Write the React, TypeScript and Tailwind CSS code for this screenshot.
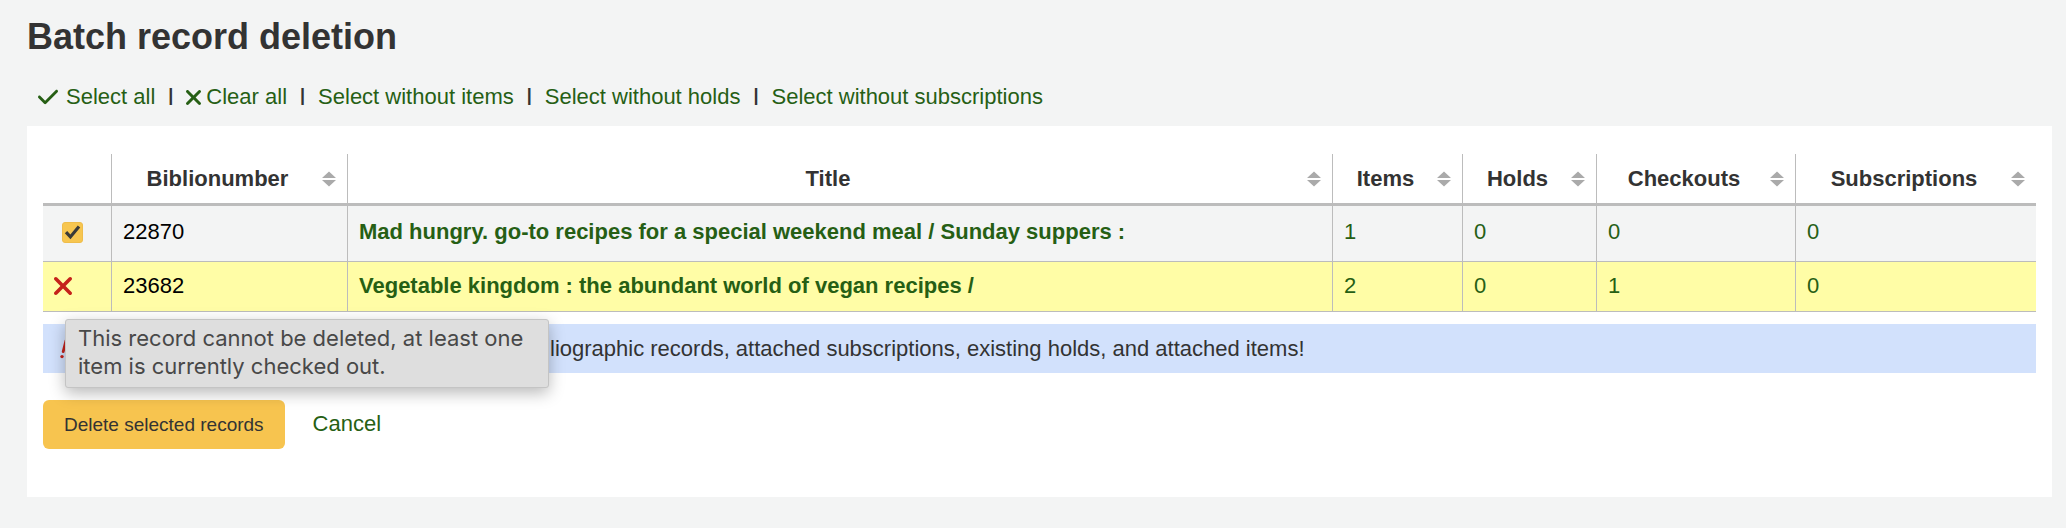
import { useState } from "react";
import type { ReactNode } from "react";

const LINK = "text-[#265f14] hover:underline";

function CheckIcon({ className }: { className?: string }) {
  return (
    <svg viewBox="0 0 448 512" fill="currentColor" className={className} aria-hidden="true">
      <path d="M438.6 105.4c12.5 12.5 12.5 32.8 0 45.3l-256 256c-12.5 12.5-32.8 12.5-45.3 0l-128-128c-12.5-12.5-12.5-32.8 0-45.3s32.8-12.5 45.3 0L160 338.7 393.4 105.4c12.5-12.5 32.8-12.5 45.3 0z" />
    </svg>
  );
}

function CrossIcon({ className }: { className?: string }) {
  return (
    <svg viewBox="32 96 320 320" fill="currentColor" className={className} aria-hidden="true">
      <path d="M342.6 150.6c12.5-12.5 12.5-32.8 0-45.3s-32.8-12.5-45.3 0L192 210.7 86.6 105.4c-12.5-12.5-32.8-12.5-45.3 0s-12.5 32.8 0 45.3L146.7 256 41.4 361.4c-12.5 12.5-12.5 32.8 0 45.3s32.8 12.5 45.3 0L192 301.3 297.4 406.6c12.5 12.5 32.8 12.5 45.3 0s12.5-32.8 0-45.3L237.3 256 342.6 150.6z" />
    </svg>
  );
}

function WarningIcon() {
  return (
    <svg viewBox="0 0 10 20" className="h-5 w-[10px] shrink-0 text-[#c5221b]" aria-hidden="true">
      <path d="M6 1.6 3.2 12.6" stroke="currentColor" strokeWidth="2.8" strokeLinecap="round" />
      <circle cx="2" cy="17.6" r="1.7" fill="currentColor" />
    </svg>
  );
}

function Separator() {
  return <span className="pb-1 text-lg font-bold leading-6 text-[#333]">|</span>;
}

function SortHeader({ children }: { children: ReactNode }) {
  return (
    <th className="border-b-[3px] border-l border-[#bcbcbc] p-0 font-bold">
      <button type="button" className="flex h-[49px] w-full items-center pl-[11px] pr-[11px] font-bold">
        <span className="flex-1 pr-[10px] text-center">{children}</span>
        <svg viewBox="0 0 14 16" className="h-4 w-[14px] shrink-0" fill="#aaa" aria-hidden="true">
          <path d="M7 0.5 14 7H0zM7 15.5 14 9H0z" />
        </svg>
      </button>
    </th>
  );
}

type Item = {
  biblionumber: number;
  title: string;
  counts: number[];
  blocked: boolean;
};

const records: Item[] = [
  {
    biblionumber: 22870,
    title: "Mad hungry. go-to recipes for a special weekend meal / Sunday suppers :",
    counts: [1, 0, 0, 0],
    blocked: false,
  },
  {
    biblionumber: 23682,
    title: "Vegetable kingdom : the abundant world of vegan recipes /",
    counts: [2, 0, 1, 0],
    blocked: true,
  },
];

export default function App() {
  const [selected, setSelected] = useState(true);

  return (
    <main className="min-h-screen bg-[#f3f4f4] pb-8 pl-[27px] pr-[14px] pt-[17px] font-['Liberation_Sans',Arial,sans-serif] text-[22px] leading-8 text-[#333]">
      <h1 className="text-4xl font-bold leading-10">Batch record deletion</h1>

      <div className="mt-6 flex items-center gap-[13px] pl-[11px]">
        <button type="button" onClick={() => setSelected(true)} className={`flex items-center gap-2 ${LINK}`}>
          <CheckIcon className="h-6 w-5" />
          Select all
        </button>
        <Separator />
        <button type="button" onClick={() => setSelected(false)} className={`flex items-center gap-[5px] ${LINK}`}>
          <CrossIcon className="size-[15px]" />
          Clear all
        </button>
        <Separator />
        <a href="#items" className={LINK}>Select without items</a>
        <Separator />
        <a href="#holds" className={LINK}>Select without holds</a>
        <Separator />
        <a href="#subscriptions" className={LINK}>Select without subscriptions</a>
      </div>

      <section className="mt-[13px] bg-white px-4 pb-12 pt-7">
        <table className="w-full table-fixed border-separate border-spacing-0">
          <colgroup>
            <col className="w-[68px]" />
            <col className="w-[236px]" />
            <col />
            <col className="w-[130px]" />
            <col className="w-[134px]" />
            <col className="w-[199px]" />
            <col className="w-[241px]" />
          </colgroup>
          <thead>
            <tr>
              <th className="border-b-[3px] border-[#bcbcbc]" />
              <SortHeader>Biblionumber</SortHeader>
              <SortHeader>Title</SortHeader>
              <SortHeader>Items</SortHeader>
              <SortHeader>Holds</SortHeader>
              <SortHeader>Checkouts</SortHeader>
              <SortHeader>Subscriptions</SortHeader>
            </tr>
          </thead>
          <tbody>
            {records.map((r) => {
              const pad = r.blocked ? "pt-0 pb-[2px]" : "pt-0 pb-[3px]";
              return (
                <tr key={r.biblionumber} className={r.blocked ? "h-[50px] bg-[#fffda6]" : "h-14 bg-[#f3f4f4]"}>
                  <td className={`border-b border-[#bcbcbc] px-0 ${pad}`}>
                    {r.blocked ? (
                      <span className="relative block w-fit pl-[11px]">
                        <CrossIcon className="size-[18px] text-[#c5221b]" />
                        <span
                          role="tooltip"
                          className="absolute left-[22px] top-[42px] z-10 w-[484px] rounded-[3px] border border-[#c4c4c4] bg-[#dedede] px-3 pb-[7px] pt-1 font-[Inter,sans-serif] text-[22px] leading-7 text-[#484848] shadow-[0_5px_16px_rgba(0,0,0,0.28)]"
                        >
                          This record cannot be deleted, at least one item is currently checked out.
                        </span>
                      </span>
                    ) : (
                      <label className="relative ml-[19px] block size-[21px]">
                        <input
                          type="checkbox"
                          aria-label={`Select record ${r.biblionumber}`}
                          checked={selected}
                          onChange={(e) => setSelected(e.target.checked)}
                          className="block size-[21px] appearance-none rounded-[3px] border border-[#efbd4b] bg-white checked:bg-[#f7c650]"
                        />
                        {selected && (
                          <svg viewBox="0 0 21 21" className="pointer-events-none absolute inset-0" fill="none" stroke="#3a3a38" strokeWidth="3.2" aria-hidden="true">
                            <path d="M4 10.2 8.4 14.9 17 4.4" />
                          </svg>
                        )}
                      </label>
                    )}
                  </td>
                  <td className={`border-b border-l border-[#bcbcbc] pl-[11px] text-black ${pad}`}>{r.biblionumber}</td>
                  <td className={`border-b border-l border-[#bcbcbc] pl-[11px] ${pad}`}>
                    <a href={`#record-${r.biblionumber}`} className={`font-bold ${LINK}`}>{r.title}</a>
                  </td>
                  {r.counts.map((n, i) => (
                    <td key={i} className={`border-b border-l border-[#bcbcbc] pl-[11px] ${pad}`}>
                      <a href={`#record-${r.biblionumber}`} className={LINK}>{n}</a>
                    </td>
                  ))}
                </tr>
              );
            })}
          </tbody>
        </table>

        <div className="mt-3 flex h-[49px] items-center whitespace-nowrap bg-[#d2e1fc] pl-[17px]">
          <WarningIcon />
          <p className="pl-[480px]">
            liographic records, attached subscriptions, existing holds, and attached items!
          </p>
        </div>

        <div className="mt-[27px] flex items-center gap-7">
          <button type="button" className="rounded-md bg-[#f7c44f] px-[21px] py-[9px] text-[19px] leading-[31px] text-[#333]">
            Delete selected records
          </button>
          <a href="#cancel" className={`pb-[2px] ${LINK}`}>Cancel</a>
        </div>
      </section>
    </main>
  );
}
